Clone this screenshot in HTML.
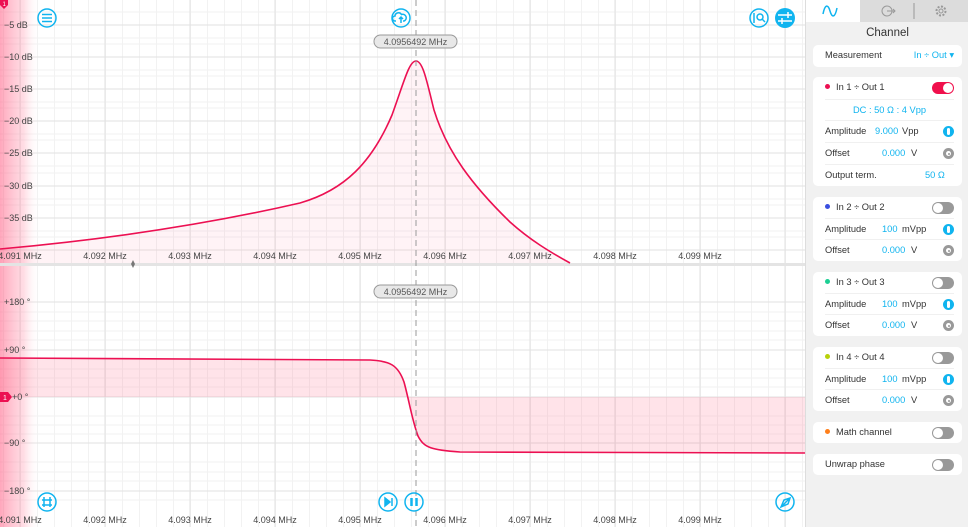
<!DOCTYPE html>
<html><head><style>
*{margin:0;padding:0;box-sizing:border-box}
body{width:968px;height:527px;overflow:hidden;background:#fff;font-family:"Liberation Sans",sans-serif;position:relative}
#plot{position:absolute;left:0;top:0;width:805px;height:527px}
#panel{position:absolute;left:805px;top:0;width:163px;height:527px;background:#f1f1f1;border-left:1px solid #ddd}
.tab{position:absolute;top:0;height:22px}
.card{position:absolute;left:7px;width:149px;background:#fff;border-radius:5px}
.row{position:absolute;left:12px;right:8px;font-size:9.3px;color:#333;height:21px;line-height:21px;border-top:1px solid #f0f0f0}
.b{color:#10b4ef}
.tg{position:absolute;right:9px;width:22px;height:12px;border-radius:6px;background:#999}
.tg::after{content:"";position:absolute;left:1px;top:1px;width:10px;height:10px;border-radius:5px;background:#fff}
.tg.on{background:#f0104c}.tg.on::after{left:11px}
.dot{display:inline-block;width:5px;height:5px;border-radius:3px;margin-right:6px;vertical-align:1px}
.ib{position:absolute;right:8px;width:11px;height:11px;border-radius:6px;background:#10b4ef}
.ib::after{content:"";position:absolute;left:4px;top:2px;width:3px;height:7px;background:#fff;border-radius:2px}
.og{position:absolute;right:8px;width:11px;height:11px;border-radius:6px;background:#999}
.og::after{content:"";position:absolute;left:3px;top:3px;width:5px;height:5px;border-radius:3px;background:#fff}
.og::before{content:"";position:absolute;left:4.5px;top:4.5px;width:2px;height:2px;border-radius:1px;background:#999;z-index:2}
</style></head><body>
<svg id="plot" width="805" height="527" xmlns="http://www.w3.org/2000/svg" font-family="Liberation Sans, sans-serif">
<defs>
<pattern id="g" x="3" y="0" width="17" height="527" patternUnits="userSpaceOnUse"><line x1="0.5" y1="0" x2="0.5" y2="527" stroke="#f2f2f2"/></pattern>
<linearGradient id="lg" x1="0" x2="1"><stop offset="0" stop-color="#ff4f79" stop-opacity=".5"/><stop offset=".6" stop-color="#ff8fa8" stop-opacity=".3"/><stop offset="1" stop-color="#fff" stop-opacity="0"/></linearGradient>
</defs>
<rect width="805" height="527" fill="url(#g)"/>
<g stroke="#f2f2f2">
<line x1="0" x2="805" y1="12" y2="12"/><line x1="0" x2="805" y1="38" y2="38"/><line x1="0" x2="805" y1="44" y2="44"/>
<line x1="0" x2="805" y1="70" y2="70"/><line x1="0" x2="805" y1="76" y2="76"/><line x1="0" x2="805" y1="102" y2="102"/><line x1="0" x2="805" y1="108" y2="108"/><line x1="0" x2="805" y1="134" y2="134"/><line x1="0" x2="805" y1="140" y2="140"/><line x1="0" x2="805" y1="166" y2="166"/><line x1="0" x2="805" y1="173" y2="173"/><line x1="0" x2="805" y1="199" y2="199"/><line x1="0" x2="805" y1="205" y2="205"/><line x1="0" x2="805" y1="231" y2="231"/><line x1="0" x2="805" y1="237" y2="237"/>
<line x1="0" x2="805" y1="312" y2="312"/><line x1="0" x2="805" y1="321" y2="321"/><line x1="0" x2="805" y1="331" y2="331"/><line x1="0" x2="805" y1="340" y2="340"/><line x1="0" x2="805" y1="369" y2="369"/><line x1="0" x2="805" y1="378" y2="378"/><line x1="0" x2="805" y1="387" y2="387"/><line x1="0" x2="805" y1="416" y2="416"/><line x1="0" x2="805" y1="425" y2="425"/><line x1="0" x2="805" y1="434" y2="434"/><line x1="0" x2="805" y1="462" y2="462"/><line x1="0" x2="805" y1="472" y2="472"/><line x1="0" x2="805" y1="481" y2="481"/><line x1="0" x2="805" y1="500" y2="500"/>
</g>
<g stroke="#e2e2e2">
<line x1="0" x2="805" y1="25" y2="25"/><line x1="0" x2="805" y1="57" y2="57"/><line x1="0" x2="805" y1="89" y2="89"/><line x1="0" x2="805" y1="121" y2="121"/><line x1="0" x2="805" y1="153" y2="153"/><line x1="0" x2="805" y1="186" y2="186"/><line x1="0" x2="805" y1="218" y2="218"/><line x1="0" x2="805" y1="250" y2="250"/>
<line x1="0" x2="805" y1="302" y2="302"/><line x1="0" x2="805" y1="350" y2="350"/><line x1="0" x2="805" y1="397" y2="397"/><line x1="0" x2="805" y1="443" y2="443"/><line x1="0" x2="805" y1="491" y2="491"/>
<line x1="20" x2="20" y1="0" y2="527"/><line x1="105" x2="105" y1="0" y2="527"/><line x1="190" x2="190" y1="0" y2="527"/><line x1="275" x2="275" y1="0" y2="527"/><line x1="360" x2="360" y1="0" y2="527"/><line x1="445" x2="445" y1="0" y2="527"/><line x1="530" x2="530" y1="0" y2="527"/><line x1="615" x2="615" y1="0" y2="527"/><line x1="700" x2="700" y1="0" y2="527"/><line x1="785" x2="785" y1="0" y2="527"/>
</g>
<rect x="0" y="0" width="40" height="527" fill="url(#lg)"/>
<rect x="0" y="263" width="805" height="3" fill="#e4e4e4"/>
<path d="M0,249 C100,240 200,226 300,203 C345,190 372,162 392,115 C404,82 409,61 416,61 C423,61 427,82 434,110 C447,152 472,185 510,222 C530,240 550,252 570,263 L0,263Z" fill="#ff4f79" fill-opacity=".07"/>
<path d="M0,249 C100,240 200,226 300,203 C345,190 372,162 392,115 C404,82 409,61 416,61 C423,61 427,82 434,110 C447,152 472,185 510,222 C530,240 550,252 570,263" fill="none" stroke="#ec1052" stroke-width="1.6"/>
<path d="M0,358 L370,360 C390,361 398,365 404,382 C409,400 412,420 418,436 C424,448 432,450 460,452 L805,453 L805,397 L0,397Z" fill="#ff4f79" fill-opacity=".16"/>
<path d="M0,358 L370,360 C390,361 398,365 404,382 C409,400 412,420 418,436 C424,448 432,450 460,452 L805,453" fill="none" stroke="#ec1052" stroke-width="1.6"/>
<line x1="416" y1="0" x2="416" y2="527" stroke="#999" stroke-dasharray="6,4"/>
<g font-size="9" fill="#444">
<text x="4" y="28">−5 dB</text><text x="4" y="60">−10 dB</text><text x="4" y="92">−15 dB</text><text x="4" y="124">−20 dB</text><text x="4" y="156">−25 dB</text><text x="4" y="189">−30 dB</text><text x="4" y="221">−35 dB</text>
<text x="4" y="305">+180 °</text><text x="4" y="353">+90 °</text><text x="12" y="400">+0 °</text><text x="4" y="446">−90 °</text><text x="4" y="494">−180 °</text>
</g>
<g font-size="9" fill="#444" text-anchor="middle">
<text x="20" y="259">4.091 MHz</text><text x="105" y="259">4.092 MHz</text><text x="190" y="259">4.093 MHz</text><text x="275" y="259">4.094 MHz</text><text x="360" y="259">4.095 MHz</text><text x="445" y="259">4.096 MHz</text><text x="530" y="259">4.097 MHz</text><text x="615" y="259">4.098 MHz</text><text x="700" y="259">4.099 MHz</text>
<text x="20" y="523">4.091 MHz</text><text x="105" y="523">4.092 MHz</text><text x="190" y="523">4.093 MHz</text><text x="275" y="523">4.094 MHz</text><text x="360" y="523">4.095 MHz</text><text x="445" y="523">4.096 MHz</text><text x="530" y="523">4.097 MHz</text><text x="615" y="523">4.098 MHz</text><text x="700" y="523">4.099 MHz</text>
</g>
<g>
<rect x="374" y="35" width="83" height="13" rx="6.5" fill="#e8e8e8" stroke="#999"/><text x="415.5" y="45" font-size="9" fill="#555" text-anchor="middle">4.0956492 MHz</text>
<rect x="374" y="285" width="83" height="13" rx="6.5" fill="#e8e8e8" stroke="#999"/><text x="415.5" y="295" font-size="9" fill="#555" text-anchor="middle">4.0956492 MHz</text>
</g>
<path d="M133,260 L135,264 L133,268 L131,264Z" fill="#777"/>
<path d="M0,0 L8,0 L8,5 L4,9 L0,5Z" fill="#ec1052"/><text x="2.5" y="6" font-size="6" fill="#fff">1</text>
<path d="M0,392 L8,392 L12,397 L8,402 L0,402Z" fill="#ec1052"/><text x="3" y="400" font-size="7" fill="#fff">1</text>
<g fill="none" stroke="#10b4ef" stroke-width="1.5">
<circle cx="47" cy="18" r="9"/><line x1="42" y1="14.5" x2="52" y2="14.5"/><line x1="42" y1="18" x2="52" y2="18"/><line x1="42" y1="21.5" x2="52" y2="21.5"/>
<circle cx="401" cy="18" r="9"/><path d="M396,21 h-1 a2.5,2.5 0 0 1 0-5 a3.5,3.5 0 0 1 6.5-1.5 a2.5,2.5 0 0 1 2.5,6.5 h-1 M401,23 v-6 M399,19 l2-2 2,2"/>
<circle cx="759" cy="18" r="9"/><circle cx="760" cy="17" r="3"/><line x1="762" y1="19" x2="765" y2="22"/><line x1="754" y1="13" x2="754" y2="23"/>
<circle cx="47" cy="502" r="9"/><path d="M44,497 v10 M50,497 v10 M42,500 h10 M42,505 h10"/>
<circle cx="388" cy="502" r="9"/><path d="M385,498 l5,4 -5,4Z" fill="#10b4ef"/><line x1="392" y1="498" x2="392" y2="506"/>
<circle cx="414" cy="502" r="9"/><line x1="411.5" y1="498" x2="411.5" y2="506" stroke-width="2.5"/><line x1="416.5" y1="498" x2="416.5" y2="506" stroke-width="2.5"/>
<circle cx="785" cy="502" r="9"/><path d="M781,507 l3-7 6-2 -2,6 -7,3Z M781,507 l9-9"/>
</g>
<circle cx="785" cy="18" r="10" fill="#10b4ef"/>
<g stroke="#fff" stroke-width="1.5"><line x1="778" y1="15" x2="792" y2="15"/><line x1="778" y1="21" x2="792" y2="21"/><line x1="788" y1="12" x2="788" y2="18"/><line x1="782" y1="18" x2="782" y2="24"/></g>
</svg>
<div id="panel">
<div class="tab" style="left:0;width:54px;background:#fff"><svg width="54" height="22"><path d="M17,14 C19,4 22,4 24,11 C26,18 29,18 31,8" fill="none" stroke="#10b4ef" stroke-width="1.5"/></svg></div>
<div class="tab" style="left:54px;width:109px;background:#dcdcdc"><svg width="109" height="22"><circle cx="27" cy="11" r="5" fill="none" stroke="#999"/><path d="M27,11 h8 M33,9 l2,2 -2,2" fill="none" stroke="#999"/><line x1="54" y1="3" x2="54" y2="19" stroke="#999"/><circle cx="81" cy="11" r="4.5" fill="none" stroke="#999" stroke-width="2" stroke-dasharray="2,1.5"/><circle cx="81" cy="11" r="2" fill="none" stroke="#999"/></svg></div>
<div style="position:absolute;top:27px;width:163px;text-align:center;font-size:11.5px;color:#333">Channel</div>
<div class="card" style="top:45px;height:22px"><div class="row" style="border:0;top:0">Measurement<span class="b" style="position:absolute;right:0">In ÷ Out ▾</span></div></div>
<div class="card" style="top:77px;height:109px">
<div class="row" style="border:0;top:0"><span class="dot" style="background:#ec1052"></span>In 1 ÷ Out 1<div class="tg on" style="top:5px;right:0"></div></div>
<div class="row b" style="top:22px;text-align:center">DC : 50 Ω : 4 Vpp</div>
<div class="row" style="top:43px">Amplitude<span class="b" style="position:absolute;left:50px">9.000</span><span style="position:absolute;left:77px">Vpp</span><div class="ib" style="top:5px;right:0"></div></div>
<div class="row" style="top:65px">Offset<span class="b" style="position:absolute;left:57px">0.000</span><span style="position:absolute;left:86px">V</span><div class="og" style="top:5px;right:0"></div></div>
<div class="row" style="top:87px">Output term.<span class="b" style="position:absolute;left:100px">50 Ω</span></div>
</div>
<div class="card" style="top:197px;height:64px">
<div class="row" style="border:0;top:0"><span class="dot" style="background:#3a4fe0"></span>In 2 ÷ Out 2<div class="tg" style="top:5px;right:0"></div></div>
<div class="row" style="top:21px">Amplitude<span class="b" style="position:absolute;left:57px">100</span><span style="position:absolute;left:77px">mVpp</span><div class="ib" style="top:5px;right:0"></div></div>
<div class="row" style="top:42px">Offset<span class="b" style="position:absolute;left:57px">0.000</span><span style="position:absolute;left:86px">V</span><div class="og" style="top:5px;right:0"></div></div>
</div>
<div class="card" style="top:272px;height:64px">
<div class="row" style="border:0;top:0"><span class="dot" style="background:#1ccf94"></span>In 3 ÷ Out 3<div class="tg" style="top:5px;right:0"></div></div>
<div class="row" style="top:21px">Amplitude<span class="b" style="position:absolute;left:57px">100</span><span style="position:absolute;left:77px">mVpp</span><div class="ib" style="top:5px;right:0"></div></div>
<div class="row" style="top:42px">Offset<span class="b" style="position:absolute;left:57px">0.000</span><span style="position:absolute;left:86px">V</span><div class="og" style="top:5px;right:0"></div></div>
</div>
<div class="card" style="top:347px;height:64px">
<div class="row" style="border:0;top:0"><span class="dot" style="background:#b8d10a"></span>In 4 ÷ Out 4<div class="tg" style="top:5px;right:0"></div></div>
<div class="row" style="top:21px">Amplitude<span class="b" style="position:absolute;left:57px">100</span><span style="position:absolute;left:77px">mVpp</span><div class="ib" style="top:5px;right:0"></div></div>
<div class="row" style="top:42px">Offset<span class="b" style="position:absolute;left:57px">0.000</span><span style="position:absolute;left:86px">V</span><div class="og" style="top:5px;right:0"></div></div>
</div>
<div class="card" style="top:422px;height:21px"><div class="row" style="border:0;top:0"><span class="dot" style="background:#ff7f1a"></span>Math channel<div class="tg" style="top:5px;right:0"></div></div></div>
<div class="card" style="top:454px;height:21px"><div class="row" style="border:0;top:0">Unwrap phase<div class="tg" style="top:5px;right:0"></div></div></div>
</div>
</body></html>
